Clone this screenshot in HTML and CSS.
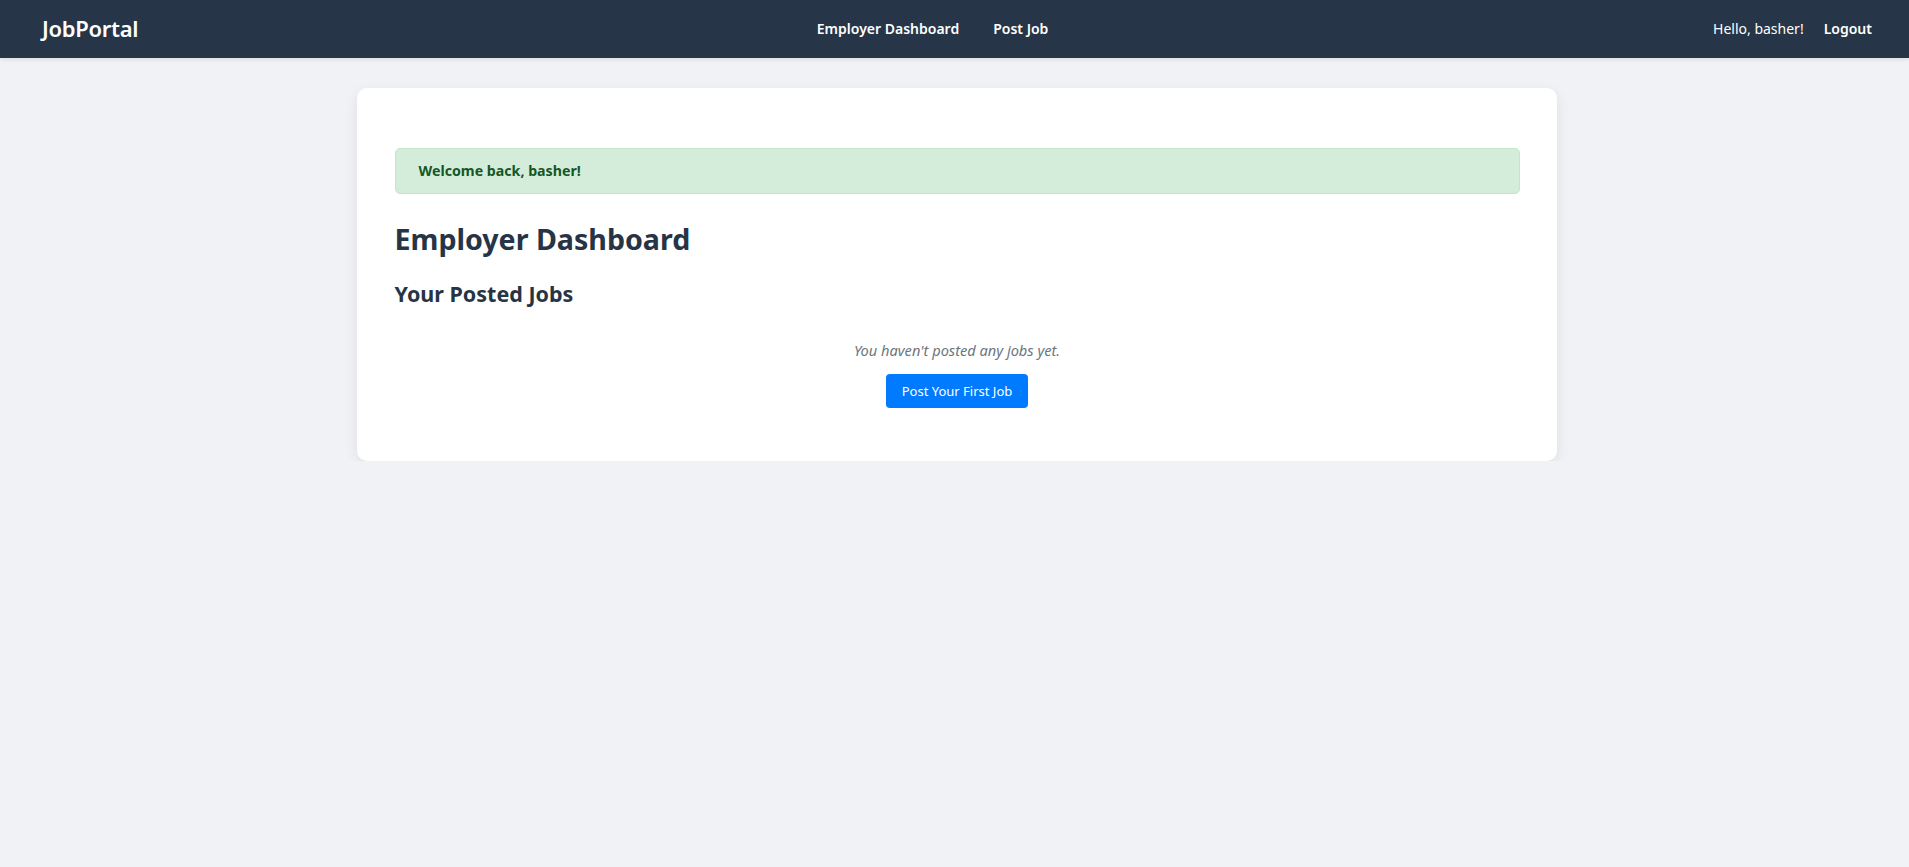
FILE: index.html
```html
<!DOCTYPE html>
<html lang="en">
<head>
<meta charset="utf-8">
<title>JobPortal - Employer Dashboard</title>
<link rel="stylesheet" href="styles.css">
</head>
<body>
<header class="navbar">
  <a class="brand" href="#">JobPortal</a>
  <nav class="nav-links">
    <a href="#">Employer Dashboard</a>
    <a href="#">Post Job</a>
  </nav>
  <div class="nav-user">
    <span class="hello">Hello, basher!</span>
    <a href="#" class="logout">Logout</a>
  </div>
</header>
<main class="container">
  <section class="card">
    <div class="alert">Welcome back, basher!</div>
    <h1 class="title">Employer Dashboard</h1>
    <h2 class="subtitle">Your Posted Jobs</h2>
    <div class="empty">
      <p class="empty-text">You haven't posted any jobs yet.</p>
      <a href="#" class="btn">Post Your First Job</a>
    </div>
  </section>
</main>
</body>
</html>
```
FILE: styles.css
```css
* { box-sizing: border-box; }
html, body { margin: 0; padding: 0; }
body {
  background: #f0f2f5;
  font-family: "Segoe UI", "Noto Sans", "Open Sans", sans-serif;
  color: #263445;
}
a { text-decoration: none; color: inherit; }

.navbar {
  height: 58px;
  background: #263547;
  color: #fff;
  display: flex;
  justify-content: space-between;
  align-items: center;
  padding: 0 37px 2px 42px;
  box-shadow: 0 2px 4px rgba(0,0,0,0.08);
}
.brand {
  font-size: 22px;
  font-weight: 600;
  letter-spacing: -0.3px;
}
.nav-links {
  display: flex;
  gap: 34px;
  margin-left: 14px;
  font-size: 14px;
  font-weight: 600;
}
.nav-user {
  display: flex;
  align-items: center;
  gap: 20px;
  font-size: 14px;
}
.logout { font-weight: 600; }

.container {
  width: 1200px;
  margin: 30px auto 0;
  position: relative;
  left: 2px;
}
.card {
  background: #fff;
  border-radius: 10px;
  box-shadow: 0 4px 14px rgba(0,0,0,0.08);
  padding: 60px 37px 53px 38px;
}
.alert {
  background: #d4edda;
  border: 1px solid #c3e6cb;
  color: #155724;
  border-radius: 5px;
  padding: 11px 23px;
  font-size: 14.2px;
  font-weight: 700;
  line-height: 22px;
}
.title {
  margin: 25px 0 0;
  font-size: 28.6px;
  font-weight: 700;
  line-height: 40px;
  color: #263445;
}
.subtitle {
  margin: 20px 0 0;
  font-size: 21.5px;
  font-weight: 700;
  line-height: 30px;
  color: #263445;
}
.empty {
  text-align: center;
  margin-top: 29px;
}
.empty-text {
  margin: 0;
  font-style: italic;
  font-size: 14.6px;
  line-height: 24px;
  color: #6c757d;
}
.btn {
  display: inline-block;
  margin-top: 12px;
  background: #007bff;
  color: #fff;
  font-size: 13px;
  line-height: 20px;
  padding: 7px 16px;
  border-radius: 4px;
}
```
